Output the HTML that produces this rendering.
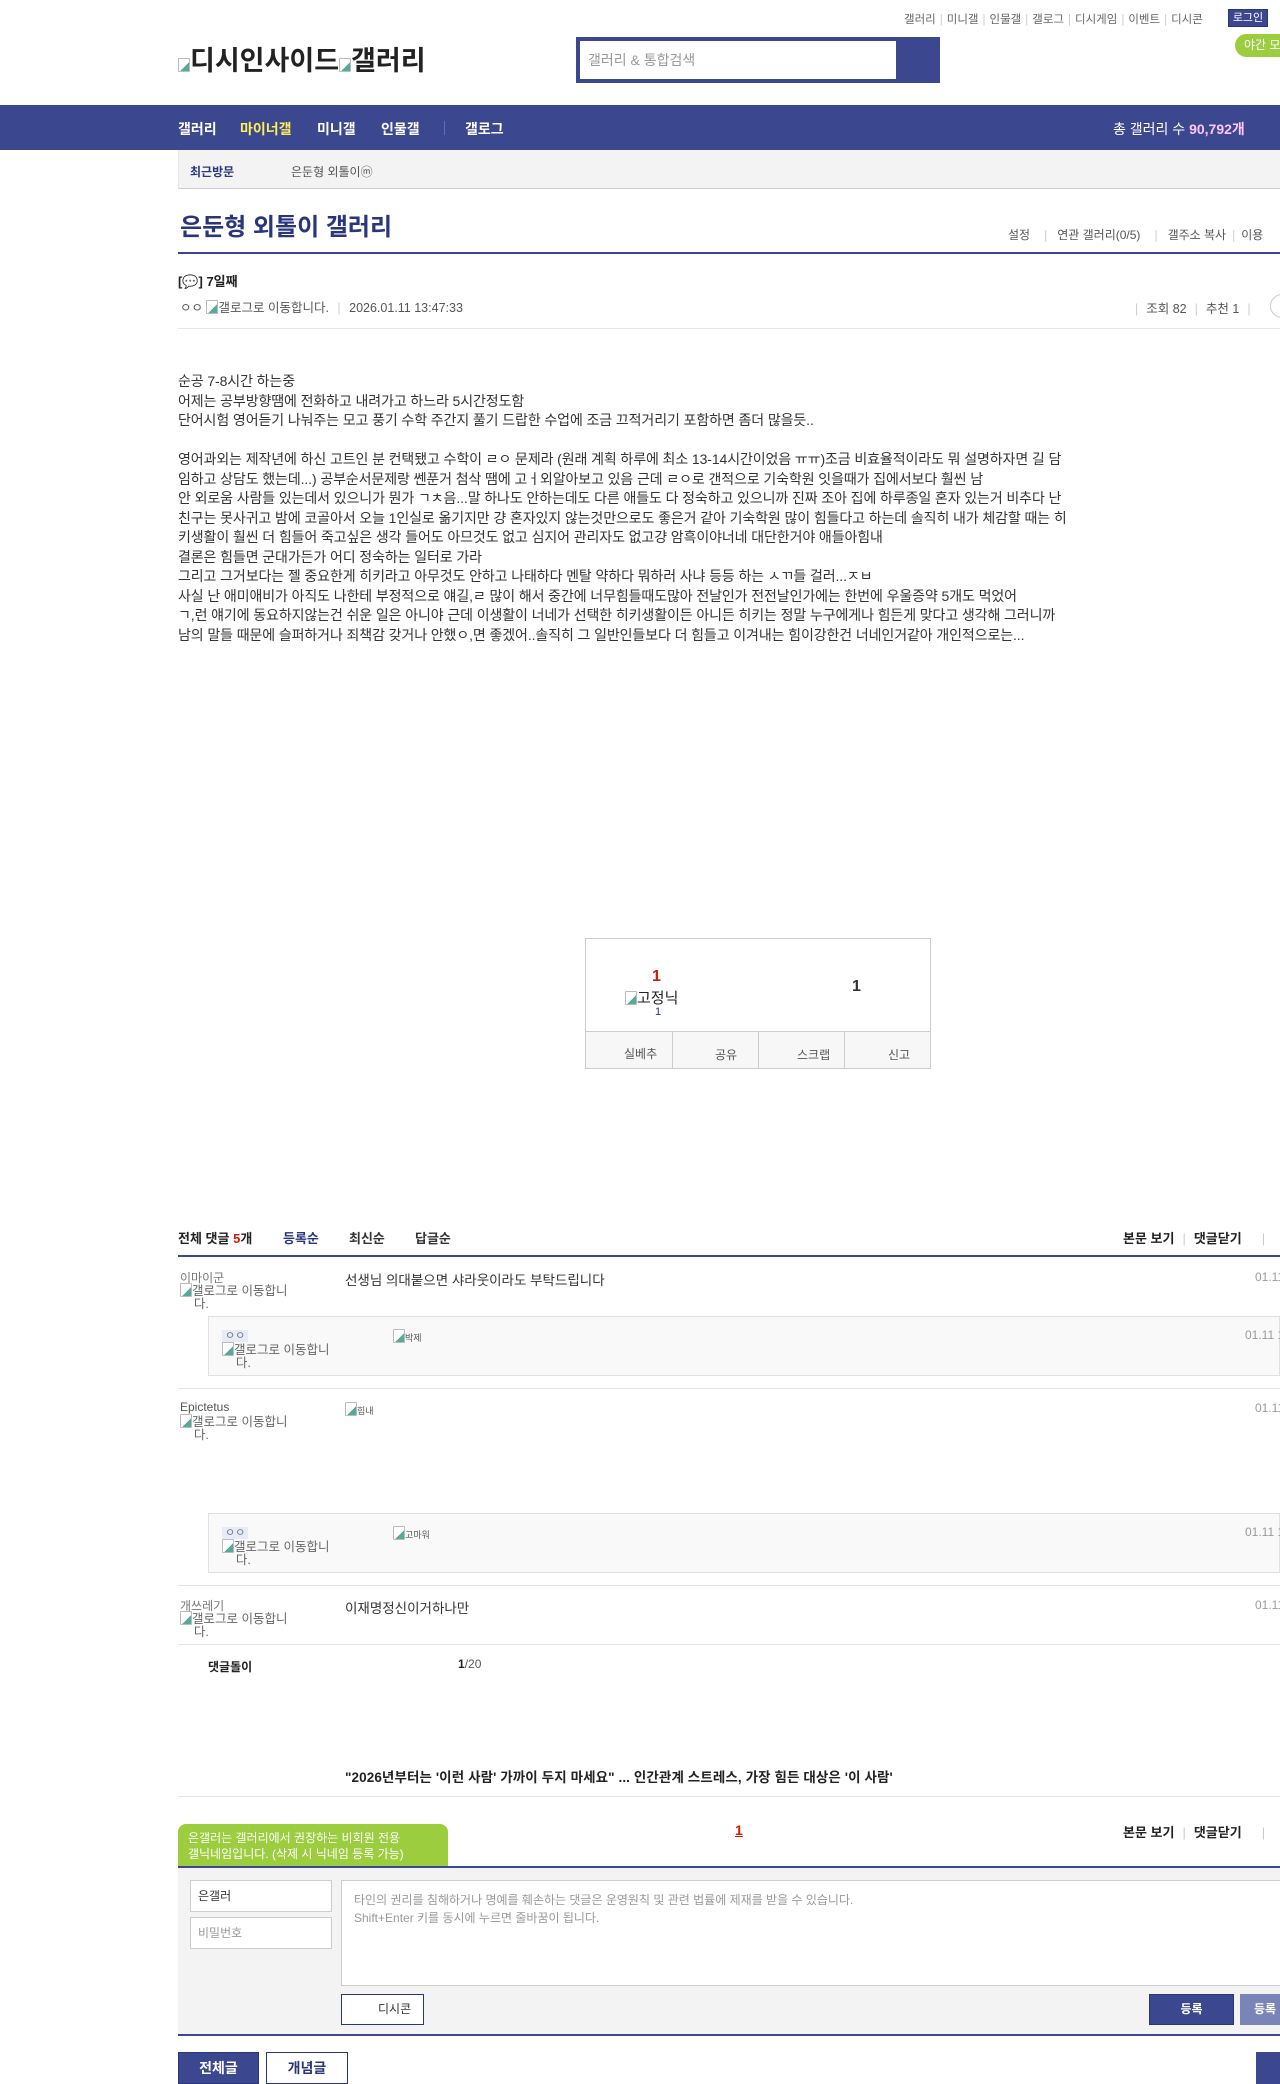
<!DOCTYPE html>
<html><head><meta charset="utf-8">
<style>
*{margin:0;padding:0;box-sizing:border-box}
body{width:1280px;height:2082px;overflow:hidden;position:relative;background:#fff;font-family:"Liberation Sans","Noto Sans CJK KR",sans-serif;color:#333;font-size:13px}
.a{position:absolute;white-space:nowrap}
.navy{color:#29367c}
.hr{position:absolute;left:178px;right:0;height:1px;background:#e5e5e5}
.hn{position:absolute;left:178px;right:0;height:2px;background:#3b4890}
.ico{display:inline-block;width:12px;height:14px;border:1px solid #bbb;border-radius:1px;vertical-align:-2px;background:linear-gradient(135deg,#fff 60%,#5a9 60%)}
.gl{font-size:12.5px;color:#666;line-height:13px}
.reply{position:absolute;left:208px;right:0;background:#f9f9f9;border:1px solid #e0e0e0}
.oo{background:#e6ebf8;color:#777;font-size:11px;padding:0 3px}
.sep{color:#ccc;margin:0 5px}
</style></head><body>
<div class="a" style="top:11px;left:904px;font-size:11.5px;color:#666">갤러리<span class="sep" style="margin:0 4px">|</span>미니갤<span class="sep" style="margin:0 4px">|</span>인물갤<span class="sep" style="margin:0 4px">|</span>갤로그<span class="sep" style="margin:0 4px">|</span>디시게임<span class="sep" style="margin:0 4px">|</span>이벤트<span class="sep" style="margin:0 4px">|</span>디시콘</div>
<div class="a" style="top:9px;left:1228px;width:40px;height:18px;background:#3b4890;border:1px solid #29367c;color:#fff;font-size:11px;text-align:center;line-height:16px">로그인</div>
<div class="a" style="top:34px;left:1235px;width:60px;height:23px;background:#9bcd3f;border-radius:12px 0 0 12px;color:#fff;font-size:12px;line-height:23px;padding-left:9px">야간 모드</div>
<div class="a" style="top:39px;left:178px;font-size:27px;color:#222;font-weight:bold"><span class="ico"></span>디시인사이드<span class="ico"></span>갤러리</div>
<div class="a" style="top:37px;left:576px;width:364px;height:46px;background:#3b4890"></div>
<div class="a" style="top:41px;left:580px;width:316px;height:38px;background:#fff;color:#999;font-size:14px;line-height:38px;padding-left:8px">갤러리 &amp; 통합검색</div>
<div class="a" style="top:105px;left:0;width:1280px;height:45px;background:#3b4890"></div>
<div class="a" style="top:119px;left:178px;font-size:14px;font-weight:bold;color:#fff">갤러리</div>
<div class="a" style="top:119px;left:240px;font-size:14px;font-weight:bold;color:#ffee56">마이너갤</div>
<div class="a" style="top:119px;left:317px;font-size:14px;font-weight:bold;color:#fff">미니갤</div>
<div class="a" style="top:119px;left:381px;font-size:14px;font-weight:bold;color:#fff">인물갤</div>
<div class="a" style="top:121px;left:444px;width:1px;height:14px;background:#6470a8"></div>
<div class="a" style="top:119px;left:465px;font-size:14px;font-weight:bold;color:#fff">갤로그</div>
<div class="a" style="top:119px;left:1113px;font-size:14px;color:#fff">총 갤러리 수 <b style="color:#ffc5f8">90,792개</b></div>
<div class="a" style="top:150px;left:178px;width:1102px;height:39px;background:#f3f3f3;border-bottom:1px solid #ccc;border-left:1px solid #e5e5e5"></div>
<div class="a navy" style="top:163px;left:190px;font-size:12px;font-weight:bold">최근방문</div>
<div class="a" style="top:163px;left:291px;font-size:12px;color:#555">은둔형 외톨이ⓜ</div>
<div class="a navy" style="top:207px;left:180px;font-size:24px;font-weight:bold">은둔형 외톨이 갤러리</div>
<div class="a" style="top:226px;left:1008px;font-size:12px;color:#555">설정<span class="sep" style="margin:0 10px 0 14px">|</span>연관 갤러리(0/5)<span class="sep" style="margin:0 10px 0 14px">|</span>갤주소 복사<span class="sep" style="margin:0 6px">|</span>이용</div>
<div class="hn" style="top:252px"></div>
<div class="a" style="top:271px;left:178px;font-size:13px;font-weight:bold;color:#222">[💬] 7일째</div>
<div class="a" style="top:297px;left:180px;font-size:12.5px;color:#555">ㅇㅇ <span class="ico"></span>갤로그로 이동합니다. <span class="sep">|</span> 2026.01.11 13:47:33</div>
<div class="a" style="top:298px;left:1135px;font-size:12.5px;color:#555"><span style="color:#ccc;margin-right:8px">|</span>조회 82<span class="sep" style="margin:0 8px">|</span>추천 1<span class="sep" style="margin:0 8px">|</span></div>
<div class="a" style="top:294px;left:1270px;width:24px;height:24px;border:1px solid #ccc;border-radius:12px"></div>
<div class="hr" style="top:328px"></div>
<div class="a" style="top:372px;left:178px;font-size:14px;line-height:19.5px;color:#333;letter-spacing:-0.1px">순공 7-8시간 하는중<br>어제는 공부방향땜에 전화하고 내려가고 하느라 5시간정도함<br>단어시험 영어듣기 나눠주는 모고 풍기 수학 주간지 풀기 드랍한 수업에 조금 끄적거리기 포함하면 좀더 많을듯..<br><br>영어과외는 제작년에 하신 고트인 분 컨택됐고 수학이 ㄹㅇ 문제라 (원래 계획 하루에 최소 13-14시간이었음 ㅠㅠ)조금 비효율적이라도 뭐 설명하자면 길 담<br>임하고 상담도 했는데...) 공부순서문제랑 쎈푼거 첨삭 땜에 고ㅓ외알아보고 있음 근데 ㄹㅇ로 갠적으로 기숙학원 잇을때가 집에서보다 훨씬 남<br>안 외로움 사람들 있는데서 있으니가 뭔가 ㄱㅊ음...말 하나도 안하는데도 다른 애들도 다 정숙하고 있으니까 진짜 조아 집에 하루종일 혼자 있는거 비추다 난<br>친구는 못사귀고 밤에 코골아서 오늘 1인실로 옮기지만 걍 혼자있지 않는것만으로도 좋은거 같아 기숙학원 많이 힘들다고 하는데 솔직히 내가 체감할 때는 히<br>키생활이 훨씬 더 힘들어 죽고싶은 생각 들어도 아므것도 없고 심지어 관리자도 없고걍 암흑이야너네 대단한거야 애들아힘내<br>결론은 힘들면 군대가든가 어디 정숙하는 일터로 가라<br>그리고 그거보다는 젤 중요한게 히키라고 아무것도 안하고 나태하다 멘탈 약하다 뭐하러 사냐 등등 하는 ㅅㄲ들 걸러...ㅈㅂ<br>사실 난 애미애비가 아직도 나한테 부정적으로 얘길,ㄹ 많이 해서 중간에 너무힘들때도많아 전날인가 전전날인가에는 한번에 우울증약 5개도 먹었어<br>ㄱ,런 얘기에 동요하지않는건 쉬운 일은 아니야 근데 이생활이 너네가 선택한 히키생활이든 아니든 히키는 정말 누구에게나 힘든게 맞다고 생각해 그러니까<br>남의 말들 때문에 슬퍼하거나 죄책감 갖거나 안했ㅇ,면 좋겠어..솔직히 그 일반인들보다 더 힘들고 이겨내는 힘이강한건 너네인거같아 개인적으로는...</div>
<div class="a" style="top:938px;left:585px;width:346px;height:131px;border:1px solid #ccc"></div>
<div class="a" style="top:1031px;left:586px;width:344px;height:37px;background:#f7f7f7;border-top:1px solid #ccc"></div>
<div class="a" style="top:1031px;left:672px;width:1px;height:37px;background:#ccc"></div>
<div class="a" style="top:1031px;left:758px;width:1px;height:37px;background:#ccc"></div>
<div class="a" style="top:1031px;left:844px;width:1px;height:37px;background:#ccc"></div>
<div class="a" style="top:1045px;left:624px;font-size:12px;color:#555">실베추</div>
<div class="a" style="top:1046px;left:715px;font-size:12px;color:#555">공유</div>
<div class="a" style="top:1046px;left:797px;font-size:12px;color:#555">스크랩</div>
<div class="a" style="top:1046px;left:888px;font-size:12px;color:#555">신고</div>
<div class="a" style="top:968px;left:652px;font-size:16px;font-weight:bold;color:#d31900">1</div>
<div class="a" style="top:987px;left:625px;font-size:15px;color:#222"><span class="ico"></span>고정닉</div>
<div class="a navy" style="top:1006px;left:655px;font-size:11px">1</div>
<div class="a" style="top:978px;left:852px;font-size:16px;font-weight:bold;color:#333">1</div>
<div class="a" style="top:1228px;left:178px;font-size:13px;font-weight:bold;color:#222">전체 댓글 <span style="color:#d31900">5</span>개</div>
<div class="a navy" style="top:1228px;left:283px;font-size:13px;font-weight:bold">등록순</div>
<div class="a" style="top:1228px;left:349px;font-size:13px;font-weight:bold;color:#333">최신순</div>
<div class="a" style="top:1228px;left:415px;font-size:13px;font-weight:bold;color:#333">답글순</div>
<div class="a" style="top:1228px;left:1123px;font-size:13px;font-weight:bold;color:#222">본문 보기<span class="sep" style="font-weight:normal;margin:0 8px">|</span>댓글닫기<span class="sep" style="font-weight:normal;margin-left:20px">|</span></div>
<div class="hn" style="top:1255px"></div>
<div class="a" style="top:1269px;left:180px;font-size:12px;color:#777">이마이군</div>
<div class="a gl" style="top:1283px;left:180px"><span class="ico"></span>갤로그로 이동합니<br>&nbsp;&nbsp;&nbsp;&nbsp;다.</div>
<div class="a" style="top:1269px;left:345px;font-size:13.5px;color:#333">선생님 의대붙으면 샤라웃이라도 부탁드립니다</div>
<div class="a" style="top:1270px;left:1255px;font-size:12px;color:#999">01.11</div>
<div class="reply" style="top:1316px;height:60px"></div>
<div class="a" style="top:1327px;left:222px"><span class="oo">ㅇㅇ</span></div>
<div class="a gl" style="top:1342px;left:222px"><span class="ico"></span>갤로그로 이동합니<br>&nbsp;&nbsp;&nbsp;&nbsp;다.</div>
<div class="a" style="top:1329px;left:393px;font-size:9px;color:#555"><span class="ico"></span>박제</div>
<div class="a" style="top:1328px;left:1245px;font-size:12px;color:#999">01.11 1</div>
<div class="hr" style="top:1388px"></div>
<div class="a" style="top:1400px;left:180px;font-size:12px;color:#555">Epictetus</div>
<div class="a gl" style="top:1414px;left:180px"><span class="ico"></span>갤로그로 이동합니<br>&nbsp;&nbsp;&nbsp;&nbsp;다.</div>
<div class="a" style="top:1402px;left:345px;font-size:9px;color:#555"><span class="ico"></span>힘내</div>
<div class="a" style="top:1401px;left:1255px;font-size:12px;color:#999">01.11</div>
<div class="reply" style="top:1513px;height:60px"></div>
<div class="a" style="top:1524px;left:222px"><span class="oo">ㅇㅇ</span></div>
<div class="a gl" style="top:1539px;left:222px"><span class="ico"></span>갤로그로 이동합니<br>&nbsp;&nbsp;&nbsp;&nbsp;다.</div>
<div class="a" style="top:1526px;left:393px;font-size:9px;color:#555"><span class="ico"></span>고마워</div>
<div class="a" style="top:1525px;left:1245px;font-size:12px;color:#999">01.11 1</div>
<div class="hr" style="top:1585px"></div>
<div class="a" style="top:1597px;left:180px;font-size:12px;color:#777">개쓰레기</div>
<div class="a gl" style="top:1611px;left:180px"><span class="ico"></span>갤로그로 이동합니<br>&nbsp;&nbsp;&nbsp;&nbsp;다.</div>
<div class="a" style="top:1597px;left:345px;font-size:13.5px;color:#333">이재명정신이거하나만</div>
<div class="a" style="top:1598px;left:1255px;font-size:12px;color:#999">01.11</div>
<div class="hr" style="top:1644px"></div>
<div class="a" style="top:1658px;left:208px;font-size:12px;font-weight:bold;color:#222">댓글돌이</div>
<div class="a" style="top:1657px;left:458px;font-size:12px;color:#555"><b style="color:#222">1</b>/20</div>
<div class="a" style="top:1766px;left:345px;font-size:13.5px;font-weight:bold;color:#222;letter-spacing:0.1px">"2026년부터는 '이런 사람' 가까이 두지 마세요" ... 인간관계 스트레스, 가장 힘든 대상은 '이 사람'</div>
<div class="hr" style="top:1796px"></div>
<div class="a" style="top:1824px;left:178px;width:270px;height:45px;background:#9bcd3f;border-radius:8px 8px 0 0;color:#fff;font-size:12px;line-height:16px;padding:6px 10px">은갤러는 갤러리에서 권장하는 비회원 전용<br>갤닉네임입니다. (삭제 시 닉네임 등록 가능)</div>
<div class="a" style="top:1869px;left:200px;width:0;height:0;border-left:5px solid transparent;border-right:5px solid transparent;border-top:7px solid #9bcd3f"></div>
<div class="a" style="top:1822px;left:735px;font-size:14px;font-weight:bold;color:#d31900;text-decoration:underline">1</div>
<div class="a" style="top:1822px;left:1123px;font-size:13px;font-weight:bold;color:#222">본문 보기<span class="sep" style="font-weight:normal;margin:0 8px">|</span>댓글닫기<span class="sep" style="font-weight:normal;margin-left:20px">|</span></div>
<div class="a" style="top:1866px;left:178px;width:1102px;height:170px;background:#f3f3f3;border-top:2px solid #3b4890;border-bottom:2px solid #3b4890"></div>
<div class="a" style="top:1880px;left:190px;width:142px;height:32px;background:#fff;border:1px solid #ccc;font-size:12px;color:#333;line-height:30px;padding-left:7px">은갤러</div>
<div class="a" style="top:1917px;left:190px;width:142px;height:32px;background:#fff;border:1px solid #ccc;font-size:12px;color:#999;line-height:30px;padding-left:7px">비밀번호</div>
<div class="a" style="top:1880px;left:341px;width:950px;height:106px;background:#fff;border:1px solid #ccc;font-size:12px;color:#999;line-height:18px;padding:10px 12px">타인의 권리를 침해하거나 명예를 훼손하는 댓글은 운영원칙 및 관련 법률에 제재를 받을 수 있습니다.<br>Shift+Enter 키를 동시에 누르면 줄바꿈이 됩니다.</div>
<div class="a" style="top:1994px;left:341px;width:83px;height:31px;background:#fff;border:1px solid #29367c;font-size:12px;color:#333;line-height:29px;padding-left:36px">디시콘</div>
<div class="a" style="top:1994px;left:1149px;width:85px;height:31px;background:#3b4890;border:1px solid #29367c;font-size:12px;font-weight:bold;color:#fff;line-height:29px;text-align:center">등록</div>
<div class="a" style="top:1994px;left:1240px;width:60px;height:31px;background:#7a84b6;font-size:12px;font-weight:bold;color:#fff;line-height:31px;padding-left:14px">등록</div>
<div class="a" style="top:2052px;left:178px;width:81px;height:32px;background:#3b4890;border:1px solid #29367c;color:#fff;font-size:14px;font-weight:bold;text-align:center;line-height:30px">전체글</div>
<div class="a navy" style="top:2052px;left:266px;width:82px;height:32px;background:#fff;border:1px solid #29367c;font-size:14px;font-weight:bold;text-align:center;line-height:30px">개념글</div>
<div class="a" style="top:2052px;left:1256px;width:40px;height:32px;background:#3b4890"></div>
</body></html>
